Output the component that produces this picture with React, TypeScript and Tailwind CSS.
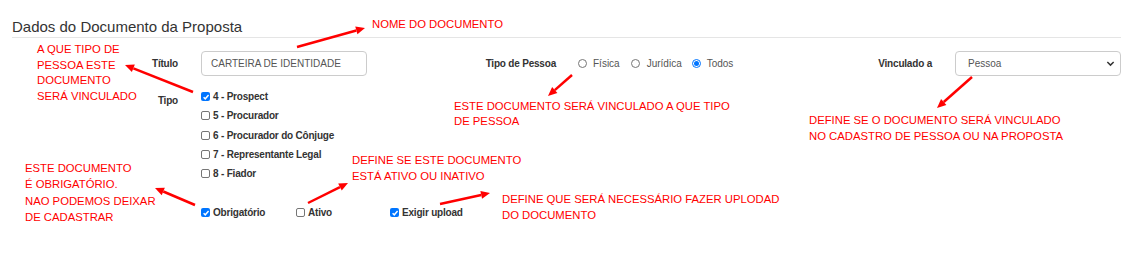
import React from 'react';

const Box = ({ checked }: { checked?: boolean }) =>
  checked ? (
    <span className="flex h-[9px] w-[9px] shrink-0 items-center justify-center rounded-[2px] bg-[#0075ff]">
      <svg viewBox="0 0 10 10" className="h-[8px] w-[8px]">
        <path d="M2 5.2 4.1 7.3 8.2 2.6" fill="none" stroke="#fff" strokeWidth="1.8" />
      </svg>
    </span>
  ) : (
    <span className="h-[9px] w-[9px] shrink-0 rounded-[2px] border border-[#767676] bg-white" />
  );

const Radio = ({ checked }: { checked?: boolean }) =>
  checked ? (
    <span className="flex h-[9px] w-[9px] shrink-0 items-center justify-center rounded-full border border-[#0075ff]">
      <span className="h-[5px] w-[5px] rounded-full bg-[#0075ff]" />
    </span>
  ) : (
    <span className="h-[9px] w-[9px] shrink-0 rounded-full border border-[#767676]" />
  );

const Check = ({ label, checked }: { label: string; checked?: boolean }) => (
  <div className="flex h-[19.25px] items-center gap-[3px]">
    <Box checked={checked} />
    <span className="text-[10px] font-bold tracking-[-0.2px]">{label}</span>
  </div>
);

// annotation arrows, tail -> head
const arrows = [
  [297, 47, 365, 28],
  [193, 92, 125, 65],
  [572, 75, 548, 96],
  [972, 77, 937, 108],
  [195, 205, 155, 188],
  [308, 203, 348, 183],
  [440, 204, 490, 193],
];

const Arrow = ({ a }: { a: number[] }) => {
  const [x1, y1, x2, y2] = a;
  const len = Math.hypot(x2 - x1, y2 - y1);
  const dx = (x2 - x1) / len;
  const dy = (y2 - y1) / len;
  const bx = x2 - dx * 9;
  const by = y2 - dy * 9;
  const pts = `${x2},${y2} ${bx - dy * 4},${by + dx * 4} ${bx + dy * 4},${by - dx * 4}`;
  return (
    <g>
      <line x1={x1} y1={y1} x2={bx} y2={by} stroke="#ff0000" strokeWidth="2.5" />
      <polygon points={pts} fill="#ff0000" />
    </g>
  );
};

const Note = ({ className, lines }: { className: string; lines: string[] }) => (
  <div className={`absolute whitespace-nowrap text-[11.3px] text-[#ff0000] ${className}`}>
    {lines.map((l) => (
      <div key={l}>{l}</div>
    ))}
  </div>
);

export default function App() {
  return (
    <div className="relative h-[256px] w-[1138px] overflow-hidden bg-white font-['Liberation_Sans',Arial,sans-serif] text-[#333]">
      <div className="ml-[12px] w-[1109px] pt-[17px]">
        <div className="h-[21px] border-b border-[#e5e5e5] text-[15px] leading-[20px] text-[#333]">
          Dados do Documento da Proposta
        </div>

        {/* first row */}
        <div className="mt-[13px] flex h-[25px]">
          <div className="flex w-[377px] shrink-0 items-center">
            <span className="w-[166px] text-right text-[10px] font-bold tracking-[-0.2px]">Título</span>
            <div className="ml-[23px] flex h-[25px] w-[166px] items-center rounded-[4px] border border-[#ccc] px-[9px] text-[10px] text-[#555]">
              CARTEIRA DE IDENTIDADE
            </div>
          </div>
          <div className="flex w-[377px] shrink-0 items-center">
            <span className="w-[167px] text-right text-[10px] font-bold tracking-[-0.2px]">Tipo de Pessoa</span>
            <div className="ml-[22px] flex items-center text-[10px] text-[#555]">
              <Radio />
              <span className="ml-[6px]">Física</span>
              <span className="ml-[11px] flex"><Radio /></span>
              <span className="ml-[7px]">Jurídica</span>
              <span className="ml-[10px] flex"><Radio checked /></span>
              <span className="ml-[6px]">Todos</span>
            </div>
          </div>
          <div className="flex w-[355px] shrink-0 items-center">
            <span className="w-[166px] text-right text-[10px] font-bold tracking-[-0.2px]">Vinculado a</span>
            <div className="ml-[23px] flex h-[25px] w-[166px] items-center justify-between rounded-[4px] border border-[#ccc] pl-[12px] pr-[5px] text-[10px] text-[#555]">
              Pessoa
              <svg viewBox="0 0 10 10" className="h-[9px] w-[9px]">
                <path d="M1.5 3.3 5 6.8 8.5 3.3" fill="none" stroke="#333" strokeWidth="1.6" />
              </svg>
            </div>
          </div>
        </div>

        {/* tipo */}
        <div className="mt-[11px] flex">
          <span className="mt-[4px] h-[19px] w-[166px] text-right text-[10px] font-bold leading-[19px] tracking-[-0.2px]">Tipo</span>
          <div className="ml-[23px] flex flex-col">
            <Check label="4 - Prospect" checked />
            <Check label="5 - Procurador" />
            <Check label="6 - Procurador do Cônjuge" />
            <Check label="7 - Representante Legal" />
            <Check label="8 - Fiador" />
          </div>
        </div>

        {/* flags */}
        <div className="mt-[20px] flex pl-[189px]">
          <div className="w-[95px]"><Check label="Obrigatório" checked /></div>
          <div className="w-[94px]"><Check label="Ativo" /></div>
          <div><Check label="Exigir upload" checked /></div>
        </div>
      </div>

      {/* annotations */}
      <svg className="pointer-events-none absolute left-0 top-0" width="1138" height="256">
        {arrows.map((a, i) => (
          <Arrow key={i} a={a} />
        ))}
      </svg>
      <Note className="left-[372px] top-[16px] leading-[16px]" lines={['NOME DO DOCUMENTO']} />
      <Note
        className="left-[37px] top-[42px] leading-[15.7px]"
        lines={['A QUE TIPO DE', 'PESSOA ESTE', 'DOCUMENTO', 'SERÁ VINCULADO']}
      />
      <Note
        className="left-[454px] top-[99px] leading-[15px]"
        lines={['ESTE DOCUMENTO SERÁ VINCULADO A QUE TIPO', 'DE PESSOA']}
      />
      <Note
        className="left-[809px] top-[112px] leading-[16px]"
        lines={['DEFINE SE O DOCUMENTO SERÁ VINCULADO', 'NO CADASTRO DE PESSOA OU NA PROPOSTA']}
      />
      <Note
        className="left-[25px] top-[160px] leading-[16.3px]"
        lines={['ESTE DOCUMENTO', 'É OBRIGATÓRIO.', 'NAO PODEMOS DEIXAR', 'DE CADASTRAR']}
      />
      <Note
        className="left-[352px] top-[152px] leading-[16px]"
        lines={['DEFINE SE ESTE DOCUMENTO', 'ESTÁ ATIVO OU INATIVO']}
      />
      <Note
        className="left-[502px] top-[191px] leading-[16px]"
        lines={['DEFINE QUE SERÁ NECESSÁRIO FAZER UPLODAD', 'DO DOCUMENTO']}
      />
    </div>
  );
}
